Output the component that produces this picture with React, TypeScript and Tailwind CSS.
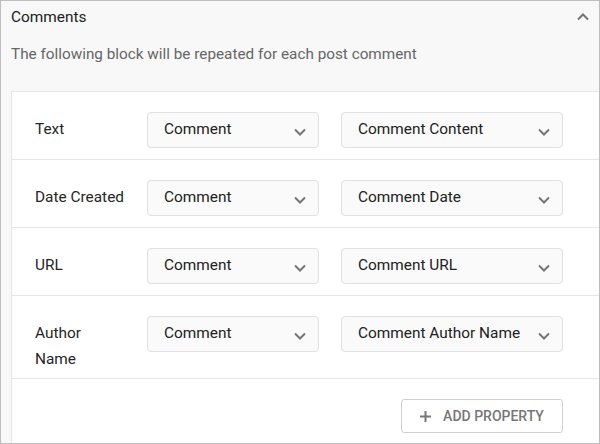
import React from 'react';

const rows = [
  { label: ['Text'], source: 'Comment', field: 'Comment Content' },
  { label: ['Date Created'], source: 'Comment', field: 'Comment Date' },
  { label: ['URL'], source: 'Comment', field: 'Comment URL' },
  { label: ['Author', 'Name'], source: 'Comment', field: 'Comment Author Name', tall: true },
];

const Chevron = ({ up = false }: { up?: boolean }) => (
  <svg width="12" height="8" viewBox="0 0 12 8" className="shrink-0">
    <polyline
      points={up ? '1,6.5 6,1.5 11,6.5' : '1,1.5 6,6.5 11,1.5'}
      fill="none"
      stroke="#757575"
      strokeWidth="2"
    />
  </svg>
);

const Select = ({ value, width }: { value: string; width: string }) => (
  <div
    className={`${width} h-[36px] flex items-center justify-between pl-[16px] pr-[12px] bg-[#fafafa] border border-[#e0e0e0] rounded-[4px] text-[15.4px] text-[#212121]`}
  >
    <span>{value}</span>
    <span className="mt-[3px]">
      <Chevron />
    </span>
  </div>
);

export default function App() {
  return (
    <div className="w-[600px] h-[444px] overflow-hidden border border-[#bdbdbd] bg-[#f8f8f8] font-['Roboto',sans-serif]">
      {/* Header */}
      <div className="flex items-center justify-between pl-[10px] pr-[10px] pt-[6px]">
        <span className="text-[15.4px] leading-5 text-[#212121]">Comments</span>
        <Chevron up />
      </div>
      <p className="pl-[10px] mt-[17px] text-[15.3px] leading-5 text-[#666]">
        The following block will be repeated for each post comment
      </p>

      {/* Card */}
      <div className="ml-[10px] mt-[27px] bg-white border-l border-t border-[#e6e6e6] h-[400px]">
        {rows.map((row) => (
          <div
            key={row.label.join(' ')}
            className={`flex items-start pl-[23px] pt-[20px] border-b border-[#e6e6e6] ${row.tall ? 'pb-[6px]' : 'pb-[11px]'}`}
          >
            <div className="w-[112px] mt-[4px] text-[15.4px] leading-[26px] text-[#262626]">
              {row.label.map((line) => (
                <div key={line}>{line}</div>
              ))}
            </div>
            <div className="flex gap-[22px]">
              <Select value={row.source} width="w-[172px]" />
              <Select value={row.field} width="w-[222px]" />
            </div>
          </div>
        ))}

        {/* Footer */}
        <div className="flex justify-end pr-[36px] pt-[20px]">
          <button className="w-[162px] h-[34px] flex items-center justify-center gap-[12px] bg-white border border-[#d0d0d0] rounded-[3px] text-[14px] font-medium text-[#777]">
            <svg width="11" height="11" viewBox="0 0 11 11">
              <path d="M5.5 0v11M0 5.5h11" stroke="#777" strokeWidth="2" />
            </svg>
            ADD PROPERTY
          </button>
        </div>
      </div>
    </div>
  );
}
